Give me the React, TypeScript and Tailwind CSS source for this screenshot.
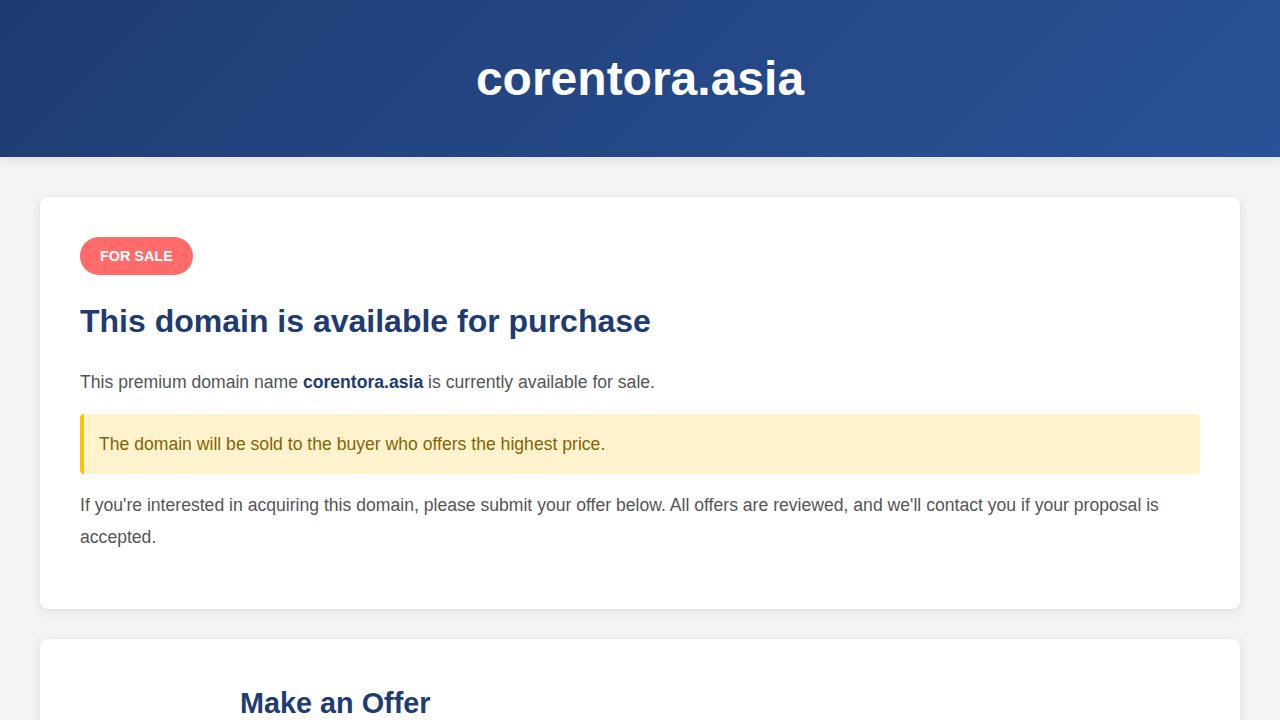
export default function App() {
  return (
    <div className="min-h-screen bg-[#f4f4f4] font-['Liberation_Sans',Arial,sans-serif] text-[#333]">
      <header className="bg-[linear-gradient(135deg,#1e3c72,#2a5298)] py-[48px] text-center shadow-[0_2px_10px_rgba(0,0,0,0.1)]">
        <h1 className="text-[48px] leading-[61px] font-bold text-white">corentora.asia</h1>
      </header>
      <main className="mx-auto max-w-[1200px] pt-[40px]">
        <section className="rounded-lg bg-white p-[40px] shadow-[0_2px_10px_rgba(0,0,0,0.1)]">
          <span className="inline-block rounded-full bg-[#ff6b6b] px-[20px] py-[10px] text-[14.4px] leading-[18px] font-bold text-white">
            FOR SALE
          </span>
          <h2 className="mt-[27px] mb-[26px] text-[32px] leading-[38px] font-bold text-[#1e3c72]">
            This domain is available for purchase
          </h2>
          <p className="text-[17.6px] leading-[32px] text-[#555]">
            This premium domain name <strong className="text-[#1e3c72]">corentora.asia</strong> is currently available for sale.
          </p>
          <div className="mt-[16px] mb-[15px] rounded border-l-4 border-[#ffc107] bg-[#fff3cd] px-[15px] py-[14px] text-[17.6px] leading-[32px] text-[#856404]">
            The domain will be sold to the buyer who offers the highest price.
          </div>
          <p className="mb-[16px] text-[17.6px] leading-[32px] text-[#555]">
            If you're interested in acquiring this domain, please submit your offer below. All offers are reviewed, and we'll contact you if your proposal is accepted.
          </p>
        </section>
        <section className="mt-[30px] rounded-lg bg-white p-[40px] shadow-[0_2px_10px_rgba(0,0,0,0.1)]">
          <div className="mx-auto max-w-[800px]">
            <h2 className="mt-[7px] text-[28.8px] leading-[34px] font-bold text-[#1e3c72]">Make an Offer</h2>
            <div className="h-[300px]" />
          </div>
        </section>
      </main>
    </div>
  );
}
